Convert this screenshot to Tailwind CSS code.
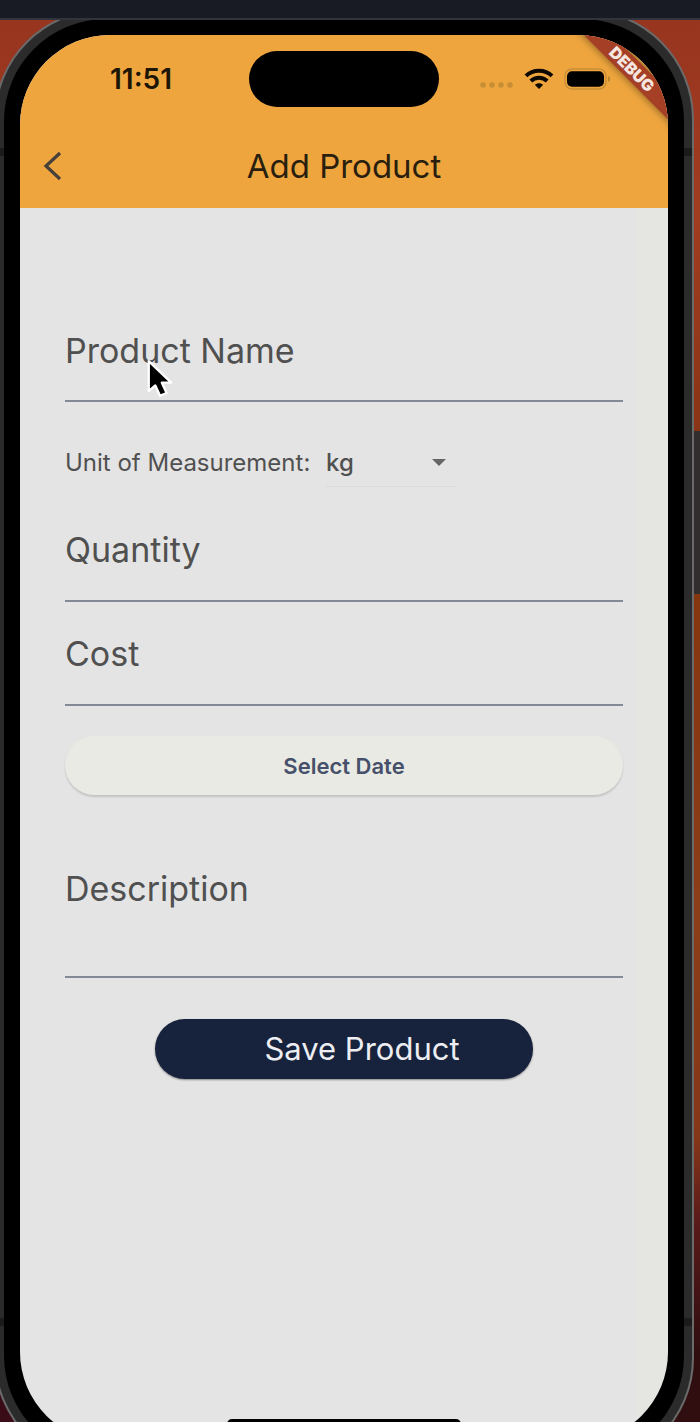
<!DOCTYPE html>
<html lang="en">
<head>
<meta charset="utf-8">
<meta name="viewport" content="width=device-width, initial-scale=1">
<title>Add Product</title>
<script src="https://cdn.jsdelivr.net/npm/@tailwindcss/browser@4"></script>
</head>
<body class="flex h-screen flex-col overflow-hidden bg-[#181b24] font-['Inter',sans-serif]">
<div class="h-5 shrink-0 border-b-2 border-[#2f343e] bg-[#181b24]"></div>

<!-- Desktop behind the device -->
<div class="relative flex min-h-0 flex-1 flex-col overflow-hidden bg-[linear-gradient(180deg,#98351f_0px,#a03c20_200px,#8a3416_411px,#322e2d_411px,#322e2d_574px,#85360f_574px,#8c3e18_900px,#843618_1120px,#5a1a1a_1200px,#300e10_1330px)]">
  <div class="absolute bottom-0 left-0 h-28 w-20 bg-[#3a0c18]"></div>

  <!-- Device frame -->
  <div class="relative -mt-[11px] mr-[6px] -mb-[46px] -ml-[6px] flex flex-1 flex-col rounded-[110px] bg-[#6a6a6a] p-[2px]">
    <div class="flex flex-1 flex-col rounded-[108px] bg-[linear-gradient(180deg,#2b2b2b_137px,#1b1b1b_137px,#1b1b1b_145px,#2b2b2b_145px,#2b2b2b_1307px,#1b1b1b_1307px,#1b1b1b_1315px,#2b2b2b_1315px)] p-2">
      <div class="flex flex-1 flex-col rounded-[102px] bg-black p-4">
        <div class="relative flex flex-1 flex-col overflow-hidden rounded-[90px] bg-[linear-gradient(90deg,#e4e4e4_95%,#e5e5e2_95%)]">

          <header class="bg-[#eea53e] text-[#2a1f0e]">
            <div class="grid h-[88px] grid-cols-3 items-center">
              <span class="pl-[90px] text-[28px] leading-8 font-semibold text-[#1d1505]">11:51</span>
              <div class="mx-auto h-14 w-[190px] rounded-full bg-black"></div>
              <div class="flex items-center pl-[28px]">
                <svg class="mt-3 h-2 w-[34px]" viewBox="0 0 34 8" fill="#c78e35"><circle cx="3" cy="4" r="2.8"/><circle cx="12" cy="4" r="2.8"/><circle cx="21" cy="4" r="2.8"/><circle cx="30" cy="4" r="2.8"/></svg>
                <svg class="ml-[10px] h-[22px] w-[30px]" viewBox="0 0 30 22" fill="none" stroke="#0d0900" stroke-width="4"><path d="M2 7.800C9 .9 21 .9 28 7.800"/><path d="M6.800 13c4.600-4.400 11.800-4.400 16.400 0"/><path d="M15 21l-4.200-4.200c2.400-2.200 6-2.200 8.400 0z" fill="#0d0900" stroke="none"/></svg>
                <svg class="ml-[10px] h-[22px] w-12" viewBox="0 0 48 22"><rect x="1" y="1" width="41" height="20" rx="7" fill="none" stroke="#c78e35" stroke-width="1.400"/><rect x="3" y="3.300" width="37" height="15.400" rx="5" fill="#000"/><path d="M44 8v6c3-1 3-5 0-6z" fill="#bd862f"/></svg>
              </div>
            </div>
            <div class="grid h-[85px] grid-cols-[80px_1fr_80px] items-center">
              <button type="button" aria-label="Back" class="flex h-12 w-12 items-center pl-[23px]">
                <svg class="h-[30px] w-5 shrink-0" viewBox="0 0 20 30" fill="none" stroke="#46403a" stroke-width="3.200"><path d="M17 2L3 15l14 13"/></svg>
              </button>
              <h1 class="text-center text-[33px] leading-10">Add Product</h1>
            </div>
          </header>

          <form class="flex flex-col px-[45px] pt-[113px] text-[#505050]">
            <label for="name" class="text-[34px] leading-[60px]">Product Name</label>
            <input id="name" type="text" class="h-[21px] w-full border-b-2 border-[#838997] outline-none">

            <div class="mt-[37px] flex h-12 items-center">
              <label for="unit" class="w-[261px] whitespace-nowrap text-[24px] leading-8">Unit of Measurement:</label>
              <div class="relative flex h-12 w-[130px] items-center border-b border-[#dadada]">
                <select id="unit" class="w-full appearance-none text-[24px] leading-8 font-medium outline-none"><option>kg</option><option>g</option><option>l</option></select>
                <svg class="pointer-events-none absolute right-[10px] h-[7px] w-[14px]" viewBox="0 0 16 8" fill="#666"><path d="M0 0h16L8 8z"/></svg>
              </div>
            </div>

            <label for="qty" class="mt-[33px] text-[34px] leading-[60px]">Quantity</label>
            <input id="qty" type="text" class="h-[22px] w-full border-b-2 border-[#838997] outline-none">
            <label for="cost" class="mt-[22px] text-[34px] leading-[60px]">Cost</label>
            <input id="cost" type="text" class="h-[22px] w-full border-b-2 border-[#838997] outline-none">

            <button type="button" class="mt-[30px] h-[59px] rounded-full bg-[#e9eae3] text-[22px] leading-8 font-semibold text-[#46506a] shadow-[0_2px_2px_rgba(0,0,0,0.14)]">Select Date</button>

            <label for="desc" class="mt-[64px] text-[34px] leading-[60px]">Description</label>
            <textarea id="desc" class="h-[59px] w-full resize-none border-b-2 border-[#838997] outline-none"></textarea>

            <button type="submit" class="mt-[41px] h-[60px] w-[378px] self-center rounded-full bg-[#17223c] pl-9 text-[31px] leading-10 text-[#eceef2] shadow-[0_1px_2px_rgba(0,0,0,0.4)]">Save Product</button>
          </form>

          <div class="mx-auto mt-auto mb-[13px] h-[10px] w-[234px] shrink-0 rounded-full bg-black"></div>

          <div class="absolute top-6 -right-11 flex h-5 w-40 rotate-45 items-center justify-center bg-[#a53f26] text-[16px] leading-5 font-black text-[#f6e6e0] shadow-[0_0_8px_rgba(0,0,0,0.5)]">DEBUG</div>

          <!-- Mouse pointer -->
          <svg class="absolute top-[324px] left-[125px] h-[38px] w-[30px]" viewBox="0 0 32 40"><path d="M4 2v32l7-6 5 11 7-3-5-11h10z" fill="#000" stroke="#fff" stroke-width="2.500" stroke-linejoin="round"/></svg>
        </div>
      </div>
    </div>
  </div>
</div>
</body>
</html>
